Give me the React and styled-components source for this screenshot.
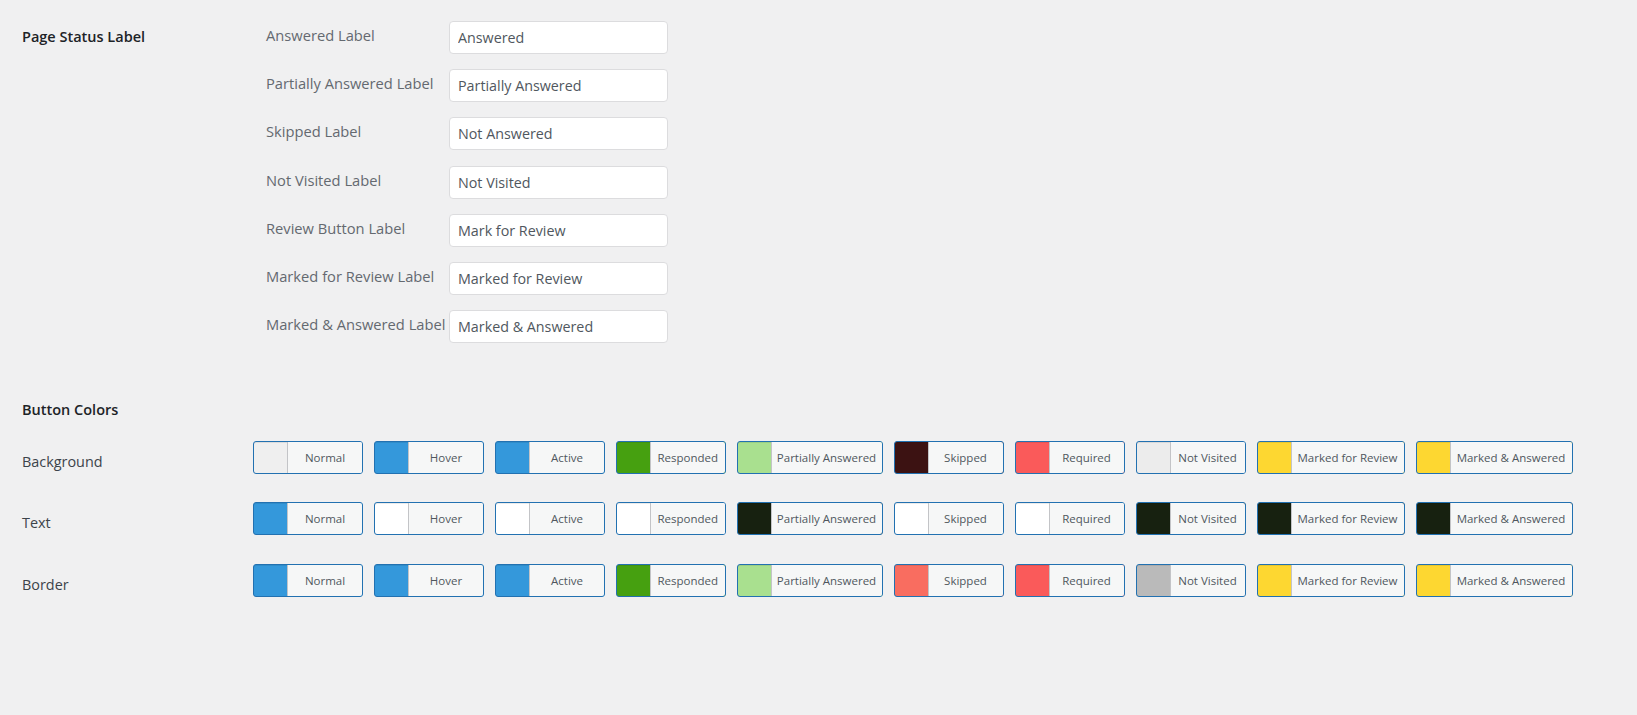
import React from "react";
import styled, { createGlobalStyle } from "styled-components";

const GlobalStyle = createGlobalStyle`
  body {
    margin: 0;
    background: #f0f0f1;
    font-family: "Open Sans", "Noto Sans", sans-serif;
    color: #3c434a;
  }
`;

const statusFields = [
  ["Answered Label", "Answered"],
  ["Partially Answered Label", "Partially Answered"],
  ["Skipped Label", "Not Answered"],
  ["Not Visited Label", "Not Visited"],
  ["Review Button Label", "Mark for Review"],
  ["Marked for Review Label", "Marked for Review"],
  ["Marked & Answered Label", "Marked & Answered"],
];

// label + button width (px)
const pickers = [
  ["Normal", 110],
  ["Hover", 110],
  ["Active", 110],
  ["Responded", 109.5],
  ["Partially Answered", 146],
  ["Skipped", 110],
  ["Required", 110],
  ["Not Visited", 110],
  ["Marked for Review", 148],
  ["Marked & Answered", 157],
];

const BLUE = "#3498db";
const DARK = "#172110";
const YELLOW = "#fdd731";

const colorRows = [
  {
    label: "Background",
    colors: [
      "#efefef",
      BLUE,
      BLUE,
      "#46a010",
      "#a9e08f",
      "#3c1212",
      "#fa5a5a",
      "#ececec",
      YELLOW,
      YELLOW,
    ],
  },
  {
    label: "Text",
    colors: [
      BLUE,
      "#ffffff",
      "#ffffff",
      "#ffffff",
      DARK,
      "#ffffff",
      "#ffffff",
      DARK,
      DARK,
      DARK,
    ],
  },
  {
    label: "Border",
    colors: [
      BLUE,
      BLUE,
      BLUE,
      "#46a010",
      "#a9e08f",
      "#f96d60",
      "#fa5a5a",
      "#bababa",
      YELLOW,
      YELLOW,
    ],
  },
];

const App = () => {
  return (
    <>
      <GlobalStyle />
      <Page>
        <StatusSection>
          <Heading>Page Status Label</Heading>
          <Fields>
            {statusFields.map(([label, value]) => (
              <Field key={label}>
                <FieldLabel>{label}</FieldLabel>
                <TextInput type="text" defaultValue={value} />
              </Field>
            ))}
          </Fields>
        </StatusSection>

        <ColorSection>
          <SectionTitle>Button Colors</SectionTitle>
          {colorRows.map((row) => (
            <ColorRow key={row.label}>
              <RowLabel>{row.label}</RowLabel>
              <Pickers>
                {row.colors.map((color, i) => (
                  <ColorButton
                    key={pickers[i][0]}
                    type="button"
                    $color={color}
                    $width={pickers[i][1]}
                  >
                    <Swatch />
                    <ButtonText>{pickers[i][0]}</ButtonText>
                  </ColorButton>
                ))}
              </Pickers>
            </ColorRow>
          ))}
        </ColorSection>
      </Page>
    </>
  );
};

export default App;

const Page = styled.div`
  padding: 21px 0 0 22px;
  min-height: 715px;
  box-sizing: border-box;
`;

const StatusSection = styled.section`
  display: grid;
  grid-template-columns: 244px 1fr;
  align-items: start;
`;

const Heading = styled.h2`
  margin: 0;
  font-size: 14.5px;
  font-weight: 600;
  line-height: 32px;
  color: #1d2327;
`;

const Fields = styled.div`
  display: flex;
  flex-direction: column;
  gap: 15.2px;
`;

const Field = styled.div`
  display: grid;
  grid-template-columns: 183px 219px;
  align-items: start;
`;

const FieldLabel = styled.label`
  font-size: 14.7px;
  line-height: 29px;
  color: #646970;
  white-space: nowrap;
`;

const TextInput = styled.input`
  box-sizing: border-box;
  width: 219px;
  height: 33px;
  margin: 0;
  padding: 0 8px;
  border: 1px solid #dcdcde;
  border-radius: 4px;
  background: #fff;
  font-family: inherit;
  font-size: 14.3px;
  color: #50575e;
  outline: none;
`;

const ColorSection = styled.section`
  margin-top: 57px;
  display: flex;
  flex-direction: column;
  gap: 28.5px;
`;

const SectionTitle = styled.h2`
  margin: 0 0 -8px;
  font-size: 14.5px;
  font-weight: 600;
  line-height: 20px;
  color: #1d2327;
`;

const ColorRow = styled.div`
  display: flex;
  align-items: flex-start;
`;

const RowLabel = styled.div`
  width: 231px;
  flex-shrink: 0;
  padding-top: 11px;
  font-size: 14.4px;
  line-height: 20px;
  color: #3c434a;
`;

const Pickers = styled.div`
  display: flex;
  gap: 11px;
`;

const ColorButton = styled.button`
  box-sizing: border-box;
  display: flex;
  align-items: stretch;
  width: ${(p) => p.$width}px;
  height: 33px;
  margin: 0;
  padding: 0;
  border: 1px solid #2271b1;
  border-radius: 3px;
  background: ${(p) => p.$color};
  box-shadow: inset 0 1px 0 rgba(0, 0, 0, 0.08);
  overflow: hidden;
  cursor: pointer;
  font-family: inherit;
`;

const Swatch = styled.span`
  width: 33px;
  flex-shrink: 0;
`;

const ButtonText = styled.span`
  flex: 1;
  box-sizing: border-box;
  padding: 0 4px;
  border-left: 1px solid #c3c4c7;
  background: #f6f7f7;
  font-size: 11.5px;
  line-height: 31px;
  color: #50575e;
  text-align: center;
  white-space: nowrap;
`;
